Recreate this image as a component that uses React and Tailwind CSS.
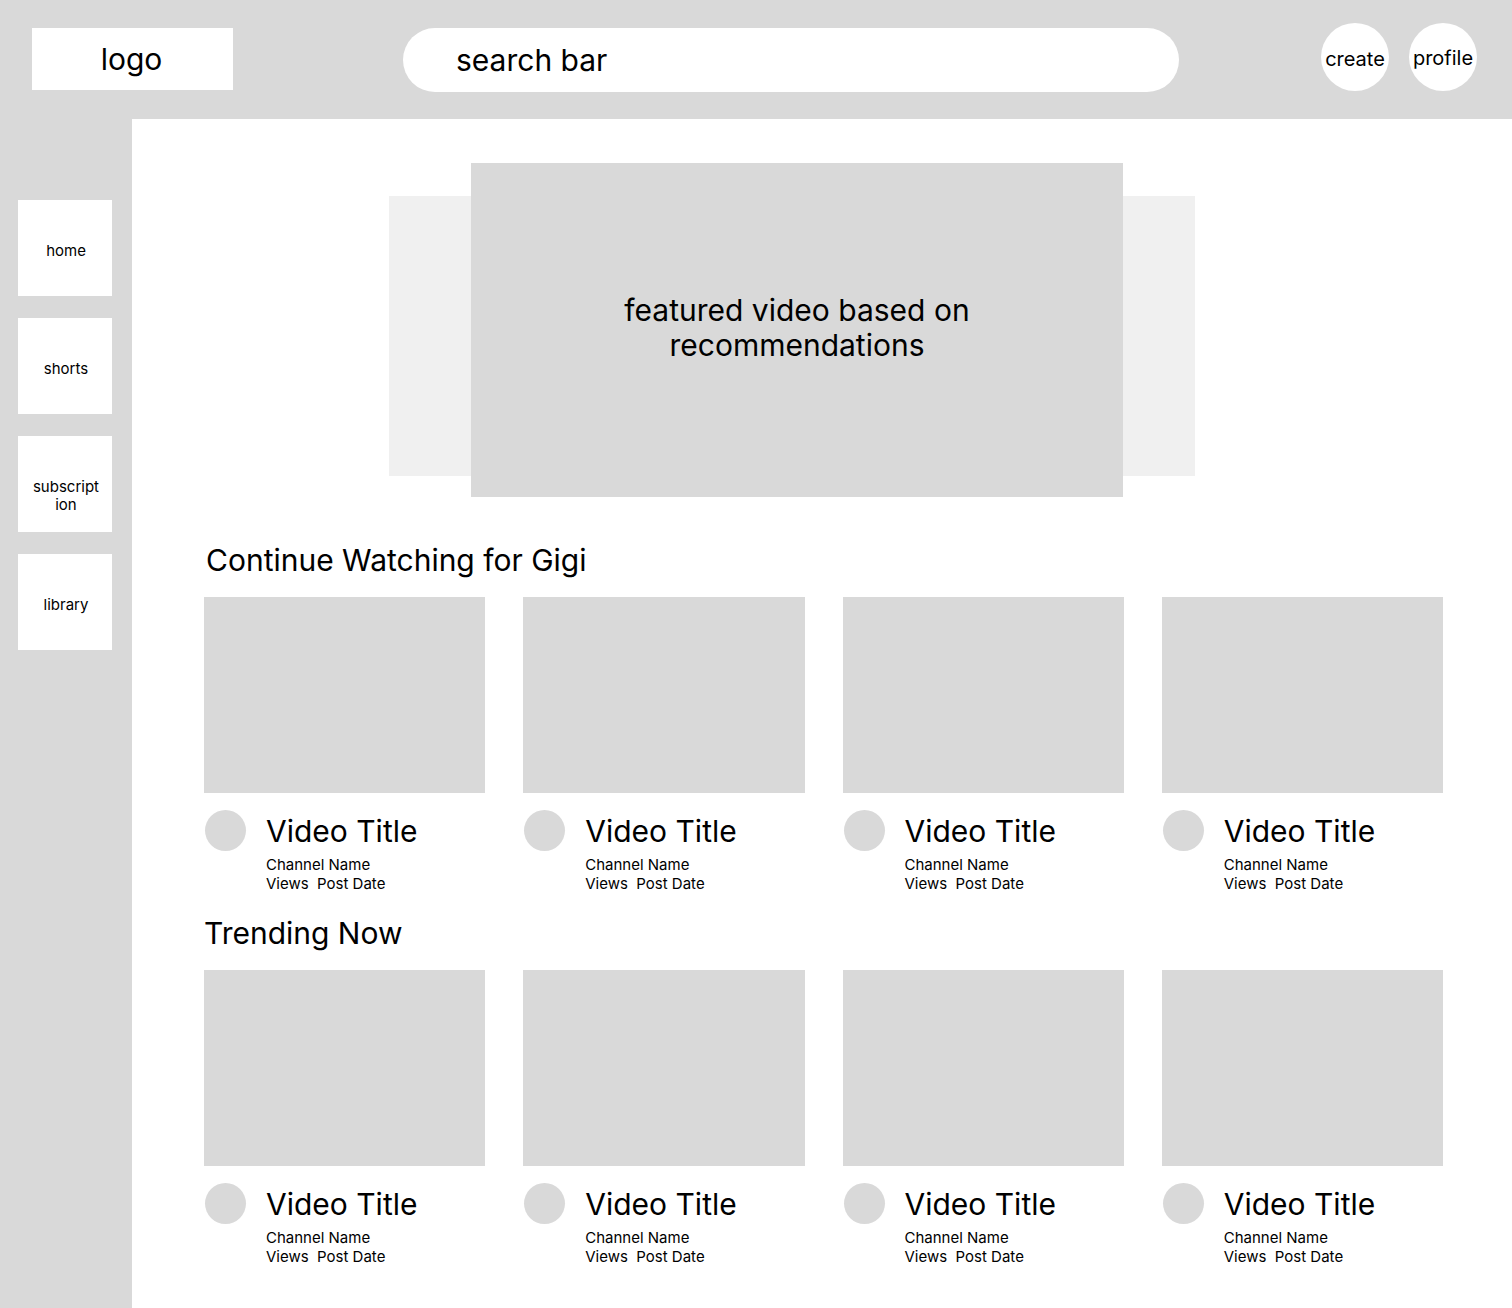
const navItems = [
  { key: "home", label: <>home</> },
  { key: "shorts", label: <>shorts</> },
  {
    key: "subscription",
    label: (
      <>
        subscript
        <br />
        ion
      </>
    ),
  },
  { key: "library", label: <>library</> },
];

function VideoCard() {
  return (
    <div className="flex flex-col">
      <div className="h-[196px] w-full bg-[#d9d9d9]" />
      <div className="flex">
        <div className="ml-[1px] mt-[17px] h-[41px] w-[41px] shrink-0 rounded-full bg-[#d9d9d9]" />
        <div className="ml-[20px] pt-[20px]">
          <div className="text-[30px] leading-[36px] text-black">Video Title</div>
          <div className="mt-[6px] text-[15px] leading-[19px] text-black">Channel Name</div>
          <div className="text-[15px] leading-[19px] text-black whitespace-pre">Views  Post Date</div>
        </div>
      </div>
    </div>
  );
}

function VideoRow() {
  return (
    <div className="grid w-[1239px] grid-cols-4 gap-x-[38px]">
      <VideoCard />
      <VideoCard />
      <VideoCard />
      <VideoCard />
    </div>
  );
}

export default function App() {
  return (
    <div
      className="flex min-h-screen flex-col bg-[#d9d9d9] text-black"
      style={{ fontFamily: "Inter, 'Liberation Sans', sans-serif" }}
    >
      {/* top bar */}
      <header className="flex h-[119px] shrink-0 items-start">
        <div className="ml-[32px] mt-[28px] flex h-[62px] w-[201px] items-center justify-center bg-white pr-[2px] text-[30px]">
          logo
        </div>
        <div className="ml-[170px] mt-[28px] flex h-[64px] w-[776px] items-center rounded-full bg-white pl-[53px] text-[30px]">
          search bar
        </div>
        <div className="ml-[142px] mt-[23px] flex h-[68px] w-[68px] items-center justify-center rounded-full bg-white pt-[4px] text-[20px]">
          create
        </div>
        <div className="ml-[20px] mt-[23px] flex h-[68px] w-[68px] items-center justify-center rounded-full bg-white pt-[2px] text-[20px]">
          profile
        </div>
      </header>

      <div className="flex flex-1">
        {/* sidebar */}
        <aside className="flex w-[132px] shrink-0 flex-col gap-[22px] pl-[18px] pt-[81px]">
          {navItems.map((item) => (
            <div
              key={item.key}
              className="flex h-[96px] w-[94px] justify-center bg-white pl-[2px] pt-[42px] text-center text-[15px] leading-[18px]"
            >
              <span>{item.label}</span>
            </div>
          ))}
        </aside>

        {/* main */}
        <main className="flex-1 bg-white pb-[40px] pl-[72px]">
          <div className="ml-[185px] mt-[44px] flex">
            <div className="mt-[33px] h-[280px] w-[82px] bg-[#f0f0f0]" />
            <div className="flex h-[334px] w-[652px] items-center justify-center bg-[#d9d9d9] pb-[4px] text-center text-[30px] leading-[35px]">
              featured video based on
              <br />
              recommendations
            </div>
            <div className="mt-[33px] h-[280px] w-[72px] bg-[#f0f0f0]" />
          </div>

          <h2 className="ml-[2px] mt-[45px] text-[30px] leading-[36px] font-normal">
            Continue Watching for Gigi
          </h2>
          <div className="mt-[19px]">
            <VideoRow />
          </div>

          <h2 className="mt-[22px] text-[30px] leading-[36px] font-normal">Trending Now</h2>
          <div className="mt-[19px]">
            <VideoRow />
          </div>
        </main>
      </div>
    </div>
  );
}
